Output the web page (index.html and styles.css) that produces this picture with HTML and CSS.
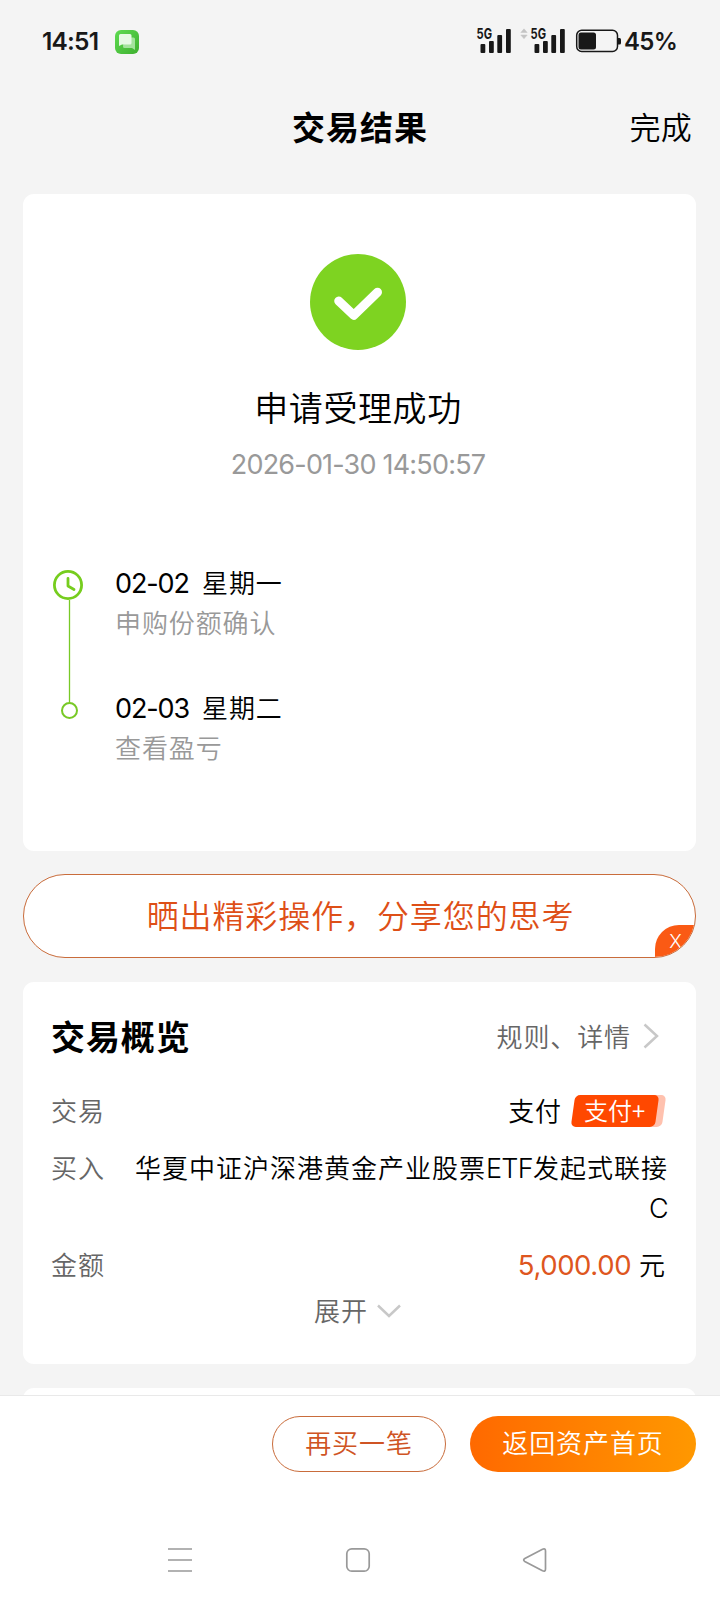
FILE: index.html
```html
<!DOCTYPE html>
<html lang="zh-CN">
<head>
<meta charset="utf-8">
<title>交易结果</title>
<link rel="stylesheet" href="styles.css">
</head>
<body>
<div class="screen">
  <div class="statusbar">
    <span class="clock">14:51</span>
    <svg class="msg" width="24" height="24" viewBox="0 0 24 24">
      <defs><linearGradient id="g" x1="0" y1="0" x2="1" y2="1"><stop offset="0" stop-color="#5edb51"/><stop offset="1" stop-color="#3fb030"/></linearGradient></defs>
      <rect width="24" height="24" rx="6" fill="url(#g)"/>
      <path d="M9 7.500h9.500a1.500 1.500 0 0 1 1.500 1.500v11l-3-2H9.500a1.500 1.500 0 0 1-1.500-1.500z" fill="#a3e39c"/>
      <path d="M5.500 4h9.500A1.500 1.500 0 0 1 16.500 5.500v7.500a1.500 1.500 0 0 1-1.500 1.500H7l-3 1.500v-10.500A1.500 1.500 0 0 1 5.500 4z" fill="#e6f9e4"/>
    </svg>
    <svg class="signals" width="146" height="40" viewBox="0 -6 146 40">
      <g fill="#181818">
        <text class="net" x="0.500" y="11" textLength="15.500" lengthAdjust="spacingAndGlyphs">5G</text>
        <rect x="4.500" y="16" width="4.800" height="9" rx="1"/><rect x="13" y="13" width="4.800" height="12" rx="1"/><rect x="21.300" y="7" width="4.800" height="18" rx="1"/><rect x="30" y="1" width="4.800" height="24" rx="1"/>
        <text class="net" x="54.500" y="11" textLength="15.500" lengthAdjust="spacingAndGlyphs">5G</text>
        <rect x="58.500" y="16" width="4.800" height="9" rx="1"/><rect x="67" y="13" width="4.800" height="12" rx="1"/><rect x="75.300" y="7" width="4.800" height="18" rx="1"/><rect x="84" y="1" width="4.800" height="24" rx="1"/>
        <rect x="102.500" y="4.500" width="17.500" height="17" rx="2.500"/>
        <path d="M142 10h1.500a1.500 1.500 0 0 1 1.500 1.500v3.500a1.500 1.500 0 0 1-1.500 1.500H142z"/>
      </g>
      <path d="M44.800 4.500L48 .8l3.200 3.700zM44.800 7L48 10.700 51.200 7z" fill="#c4c4c4" stroke="#c4c4c4" stroke-width=".5"/>
      <rect x="100.700" y="2.200" width="40.800" height="21.300" rx="5" fill="none" stroke="#181818" stroke-width="1.500"/>
    </svg>
    <span class="percent">45%</span>
  </div>

  <header class="header">
    <h1 class="title">交易结果</h1>
    <span class="done">完成</span>
  </header>

  <main class="content">
    <section class="card result">
      <svg class="check" width="96" height="96" viewBox="0 0 96 96"><circle cx="48" cy="48" r="48" fill="#7ed321"/><path d="M28.700 47L43.800 61.300 67.500 38.200" fill="none" stroke="#fff" stroke-width="9" stroke-linecap="round" stroke-linejoin="round"/></svg>
      <div class="success">申请受理成功</div>
      <div class="time">2026-01-30 14:50:57</div>
      <div class="timeline">
        <svg class="track" width="34" height="152" viewBox="0 0 34 152" fill="none" stroke="#78c926">
          <path d="M18.500 31v103" stroke-width="1.300"/>
          <circle cx="17" cy="16" r="13.600" stroke="#76cd1e" stroke-width="2.800"/>
          <path d="M17 9.500V17l6 3.500" stroke="#76cd1e" stroke-width="2.800" stroke-linecap="round" stroke-linejoin="round"/>
          <circle cx="18.500" cy="141.500" r="7.500" stroke-width="2"/>
        </svg>
        <div class="steps">
          <div class="step"><div class="day"><span class="date">02-02</span><span>星期一</span></div><div class="note">申购份额确认</div></div>
          <div class="step"><div class="day"><span class="date">02-03</span><span>星期二</span></div><div class="note">查看盈亏</div></div>
        </div>
      </div>
    </section>

    <div class="share"><span>晒出精彩操作，分享您的思考</span><span class="close">X</span></div>

    <section class="card overview">
      <div class="head">
        <h2 class="subtitle">交易概览</h2>
        <span class="rules">规则、详情</span>
        <svg class="chevron" width="16" height="26" viewBox="0 0 16 26" fill="none" stroke="#c8c8c8" stroke-width="2.500"><path d="M1.500 1.500L14 13 1.500 24.500"/></svg>
      </div>
      <div class="row pay">
        <span class="label">交易</span>
        <span class="value">支付</span>
        <span class="tag"><span class="tagtext">支付+</span></span>
      </div>
      <div class="row buy">
        <span class="label">买入</span>
        <span class="value">华夏中证沪深港黄金产业股票<span class="latin">ETF</span>发起式联接<br><span class="latin">C</span></span>
      </div>
      <div class="row amount">
        <span class="label">金额</span>
        <span class="money">5,000.00</span>
        <span class="value">元</span>
      </div>
      <div class="expand">展开<svg class="down" width="24" height="14" viewBox="0 0 24 14" fill="none" stroke="#c8c8c8" stroke-width="2.500"><path d="M1 1.500L12 12 23 1.500"/></svg></div>
    </section>
    <section class="card next"></section>
  </main>

  <footer class="footer">
    <div class="actions">
      <button class="btn outline">再买一笔</button>
      <button class="btn solid">返回资产首页</button>
    </div>
    <svg class="nav" width="720" height="40" viewBox="0 0 720 40" fill="none" stroke="#999" stroke-width="1.700">
      <path d="M168 9h24M168 20h24M168 31h24"/>
      <rect x="346.800" y="8.800" width="22.400" height="22.400" rx="5"/>
      <path d="M524.800 18.600L542.500 9.200Q545.500 8 545.500 11v18Q545.500 32 542.500 30.800L524.800 21.400Q522.500 20 524.800 18.600z"/>
    </svg>
  </footer>
</div>
</body>
</html>
```
FILE: styles.css
```css
* { box-sizing: border-box; }
body {
  margin: 0;
  background: #f4f4f4;
  color: #000;
  font: 350 26px/40px "Noto Sans CJK SC", sans-serif;
  letter-spacing: 0.9px;
}
.screen { display: flex; flex-direction: column; width: 720px; height: 1604px; overflow: hidden; }
h1, h2 { margin: 0; }

.statusbar { display: flex; flex: none; align-items: center; height: 84px; padding: 0 42px; color: #181818; letter-spacing: 0; }
.clock, .percent { font: 600 24px/30px Inter, sans-serif; }
.clock { width: 58px; padding-bottom: 2px; letter-spacing: -0.8px; font-size: 24.5px; }
.msg { flex: none; margin-left: 15px; }
.signals { flex: none; margin-left: 337px; }
.net { font: 700 14.500px Inter, sans-serif; }
.percent { margin-left: 2px; letter-spacing: -0.7px; }

.header { display: grid; grid-template-columns: 1fr auto 1fr; flex: none; align-items: center; height: 88px; padding: 0 28px 5px; }
.title { grid-column: 2; font-size: 33px; font-weight: 700; letter-spacing: 1px; }
.done { justify-self: end; font-size: 31px; letter-spacing: 0.3px; }

.content { flex: 1; min-height: 0; overflow: hidden; padding: 22px 24px 0 23px; }
.card { border-radius: 11px; background: #fff; }
.result { display: flex; flex-direction: column; align-items: center; height: 657px; padding-top: 60px; }
.check { flex: none; margin-right: 3px; }
.success { margin: 33px 3px 0 0; font-size: 34px; line-height: 48px; letter-spacing: 0.6px; }
.time { margin: 14px 3px 0 0; color: #999; font: 27px/40px Inter, sans-serif; letter-spacing: -0.8px; }
.timeline { display: flex; align-self: stretch; gap: 30px; margin-top: 76px; padding-left: 28px; }
.track { flex: none; margin-top: 8px; }
.step { height: 125px; }
.day { display: flex; height: 41px; padding-top: 1px; }
.date { width: 87px; padding-top: 2px; font: 27px/40px Inter, sans-serif; letter-spacing: -1.1px; }
.note { line-height: 40px; color: #999; }

.share {
  position: relative;
  height: 84px;
  margin: 23px 0 24px;
  overflow: hidden;
  border: 1.5px solid #c96c3b;
  border-radius: 42px;
  background: #fff;
  color: #de4f17;
  font-size: 32px;
  line-height: 78px;
  letter-spacing: 0.9px;
  text-align: center;
  text-indent: 2px;
}
.close {
  position: absolute;
  right: 0;
  bottom: 0;
  width: 40px;
  height: 32px;
  border-top-left-radius: 24px;
  background: #fa5a14;
  color: #fff;
  font: 300 19px/34px Inter, sans-serif;
}

.overview { height: 382px; padding: 29px 28px 0; }
.head { display: flex; align-items: center; height: 50px; padding-right: 9px; }
.subtitle { flex: 1; font-size: 34px; font-weight: 700; letter-spacing: 0.9px; }
.rules { color: #666; }
.chevron { margin-left: 12px; }
.row { display: flex; align-items: flex-start; height: 40px; }
.label { flex: 1; color: #666; white-space: nowrap; }
.value { text-align: right; white-space: nowrap; }
.pay { margin-top: 29px; padding-right: 2px; }
.tag { position: relative; z-index: 0; width: 94px; height: 32px; margin: 5px 1px 0 9px; }
.tag::before, .tag::after { content: ""; position: absolute; z-index: -1; top: 0; bottom: 0; border-radius: 5px; transform: skewX(-8deg); }
.tag::before { right: 1px; width: 30px; background: #ffc1ae; }
.tag::after { left: 2px; width: 84px; background: #ff4800; }
.tagtext { display: block; width: 87px; color: #fff; font-size: 24px; line-height: 30px; letter-spacing: 0; text-align: center; }
.buy { height: 80px; margin-top: 17px; }
.buy .value { letter-spacing: 1px; }
.latin { font-family: Inter, sans-serif; font-size: 27px; line-height: 1; }
.buy .latin { letter-spacing: -0.7px; }
.amount { margin-top: 17px; padding-right: 2px; }
.money { margin-right: 8px; padding-top: 1px; color: #de5620; font: 27.5px/40px Inter, sans-serif; letter-spacing: -0.4px; }
.expand { display: flex; align-items: center; justify-content: center; gap: 9px; margin-top: 6px; padding-right: 4px; color: #666; }
.down { margin-top: 2px; }
.next { height: 40px; margin-top: 24px; }

.footer { flex: none; height: 209px; border-top: 1px solid #e9e9e9; background: #fff; }
.actions { display: flex; justify-content: flex-end; gap: 24px; padding: 20px 24px 0; }
.btn { height: 56px; padding: 0 0 4px; border: 0; border-radius: 28px; font: inherit; letter-spacing: 0.9px; }
.outline { width: 174px; border: 1.5px solid #c96c3b; background: #fff; color: #cf5424; }
.solid { width: 226px; background: linear-gradient(90deg, #ff6900, #ff9800); color: #fff; }
.nav { display: block; margin-top: 68px; }
```
